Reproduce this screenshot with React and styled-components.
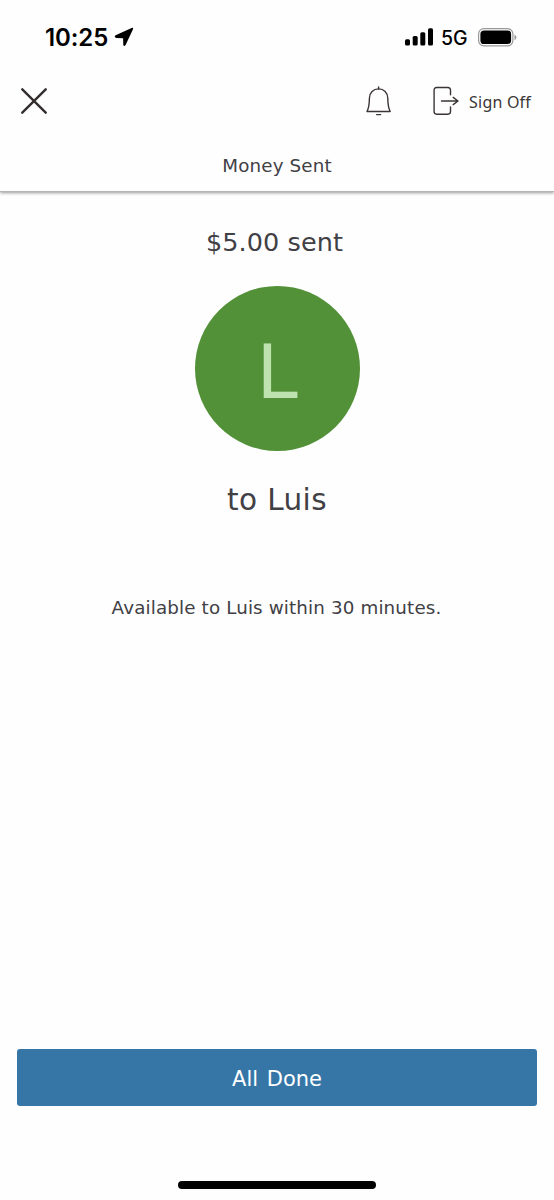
import React from "react";
import styled, { createGlobalStyle } from "styled-components";

const App = () => {
  return (
    <Screen>
      <GlobalStyle />
      <StatusBar>
        <Clock>10:25</Clock>
        <LocationIcon />
        <Status>
          <SignalIcon />
          <Network>5G</Network>
          <BatteryIcon />
        </Status>
      </StatusBar>
      <Header>
        <Toolbar>
          <IconButton aria-label="Close">
            <CloseIcon />
          </IconButton>
          <Actions>
            <IconButton aria-label="Notifications">
              <BellIcon />
            </IconButton>
            <SignOff>
              <SignOffIcon />
              <span>Sign Off</span>
            </SignOff>
          </Actions>
        </Toolbar>
        <Title>Money Sent</Title>
      </Header>
      <Content>
        <Amount>$5.00 sent</Amount>
        <Avatar>
          <span>L</span>
        </Avatar>
        <Recipient>to Luis</Recipient>
        <Note>Available to Luis within 30 minutes.</Note>
      </Content>
      <Footer>
        <DoneButton>All Done</DoneButton>
        <HomeIndicator />
      </Footer>
    </Screen>
  );
};

export default App;

const LocationIcon = () => (
  <svg width="20" height="20" viewBox="0 0 20 20">
    <path
      d="M1.6 8.2 L17.6 0.9 Q19.6 0.3 19 2.2 L11.6 18 Q10 20 9.3 18 L9.1 11.2 L2.2 11 Q-0.4 10 1.6 8.2 Z"
      fill="#000"
    />
  </svg>
);

const SignalIcon = () => (
  <svg width="28" height="18" viewBox="0 0 28 18">
    <rect x="0" y="11.2" width="5" height="6.3" rx="1.5" />
    <rect x="7.7" y="8" width="5" height="9.5" rx="1.5" />
    <rect x="15.3" y="4.2" width="5" height="13.3" rx="1.5" />
    <rect x="23" y="0.3" width="5" height="17.2" rx="1.5" />
  </svg>
);

const BatteryIcon = () => (
  <svg width="39" height="19" viewBox="0 0 39 19">
    <rect
      x="0.6"
      y="0.6"
      width="34.3"
      height="17.3"
      rx="5.4"
      fill="none"
      stroke="#999"
      strokeWidth="1.2"
    />
    <rect x="2.4" y="2.4" width="30.7" height="13.7" rx="3.7" />
    <path d="M36.5 6.4 Q38.4 7.4 38.4 9.3 Q38.4 11.2 36.5 12.2 Z" fill="#999" />
  </svg>
);

const CloseIcon = () => (
  <svg width="26" height="26" viewBox="0 0 26 26">
    <path
      d="M1.3 1.3 L24.7 24.7 M24.7 1.3 L1.3 24.7"
      stroke="#332e2d"
      strokeWidth="2.4"
      strokeLinecap="round"
    />
  </svg>
);

const BellIcon = () => (
  <svg width="26" height="30" viewBox="0 0 26 30">
    <g
      fill="none"
      stroke="#3b3635"
      strokeWidth="1.4"
      strokeLinecap="round"
      strokeLinejoin="round"
    >
      <path d="M12.6 0.9 V3" />
      <path d="M1 25.5 C2.8 22 3.4 18.5 3.4 12.2 C3.4 6.5 7.4 2.9 12.6 2.9 C17.8 2.9 21.8 6.5 21.8 12.2 C21.8 18.5 22.4 22 24.2 25.5 Z" />
      <path d="M10.6 28.6 H14.6" />
    </g>
  </svg>
);

const SignOffIcon = () => (
  <svg width="26" height="30" viewBox="0 0 26 30">
    <g
      fill="none"
      stroke="#3b3635"
      strokeWidth="1.4"
      strokeLinecap="round"
      strokeLinejoin="round"
    >
      <path d="M17.5 8.8 V4.1 Q17.5 1.5 14.9 1.5 H3.6 Q1.1 1.5 1.1 4.1 V25.6 Q1.1 28.2 3.6 28.2 H14.9 Q17.5 28.2 17.5 25.6 V21" />
      <path d="M8.5 15 H25 M20.2 11.4 L25 15 L20.2 18.6" />
    </g>
  </svg>
);

const GlobalStyle = createGlobalStyle`
  * {
    box-sizing: border-box;
  }
  body {
    margin: 0;
    background: #fefefe;
  }
  svg {
    display: block;
    flex-shrink: 0;
  }
`;

const Screen = styled.div`
  display: flex;
  flex-direction: column;
  width: 100%;
  height: 1200px;
  color: #414045;
  font-family: "DejaVu Sans", Verdana, sans-serif;
`;

const StatusBar = styled.div`
  display: flex;
  align-items: center;
  height: 74px;
  padding: 0 37px 0 45px;
  color: #000;
  font-family: Inter, sans-serif;
`;

const Clock = styled.span`
  width: 69px;
  font-size: 24px;
  font-weight: 600;
  letter-spacing: -0.1px;
`;

const Status = styled.div`
  display: flex;
  align-items: center;
  margin-left: auto;
`;

const Network = styled.span`
  width: 27px;
  margin: 0 10px 0 8px;
  padding-top: 1px;
  font-size: 19.5px;
  font-weight: 500;
  white-space: nowrap;
`;

const Header = styled.header`
  height: 118px;
  border-bottom: 1px solid #b4b4b4;
  box-shadow: 0 1px 3px rgba(0, 0, 0, 0.4);
  /* the shadow only falls below the bar */
  clip-path: inset(0 0 -6px 0);
`;

const Toolbar = styled.div`
  display: flex;
  align-items: center;
  justify-content: space-between;
  height: 54px;
  padding: 0 22px 0 21px;
`;

const IconButton = styled.button`
  padding: 0;
  border: 0;
  background: none;
`;

const Actions = styled.div`
  display: flex;
  align-items: center;
  gap: 41px;
`;

const SignOff = styled.button`
  display: flex;
  align-items: center;
  gap: 10px;
  padding: 0 1px 0 0;
  border: 0;
  background: none;
  color: #3b3635;
  font-family: "Noto Sans", sans-serif;
  font-size: 16px;
  letter-spacing: 0.2px;
  white-space: nowrap;

  span {
    padding-top: 2px;
  }
`;

const Title = styled.h1`
  margin: 0;
  padding-top: 26px;
  font-size: 18.3px;
  font-weight: 400;
  line-height: 24px;
  letter-spacing: 0.15px;
  text-align: center;
`;

const Content = styled.main`
  display: flex;
  flex: 1;
  flex-direction: column;
  align-items: center;
`;

const Amount = styled.p`
  margin: 34px 5px 0 0;
  font-size: 25.5px;
  line-height: 32px;
  letter-spacing: 0.1px;
`;

const Avatar = styled.div`
  display: flex;
  align-items: center;
  justify-content: center;
  width: 165px;
  height: 165px;
  margin-top: 28px;
  padding-top: 7px;
  border-radius: 50%;
  background: #529138;
  color: #bfe3b0;
  font-size: 74px;
  line-height: 1;
`;

const Recipient = styled.p`
  margin: 30px 0 0;
  font-size: 29.5px;
  line-height: 38px;
  letter-spacing: 0.4px;
`;

const Note = styled.p`
  margin: 77px 1px 0 0;
  font-size: 18.3px;
  line-height: 24px;
  letter-spacing: 0.14px;
`;

const Footer = styled.footer`
  display: flex;
  flex-direction: column;
  align-items: center;
  height: 151px;
  padding: 0 17px;
`;

const DoneButton = styled.button`
  width: 100%;
  height: 57px;
  padding: 2px 0 0;
  border: 0;
  border-radius: 3px;
  background: #3576a7;
  color: #fff;
  font-family: inherit;
  font-size: 21px;
  word-spacing: 2px;
`;

const HomeIndicator = styled.div`
  width: 198px;
  height: 8px;
  margin-top: 75px;
  border-radius: 4px;
  background: #000;
`;
